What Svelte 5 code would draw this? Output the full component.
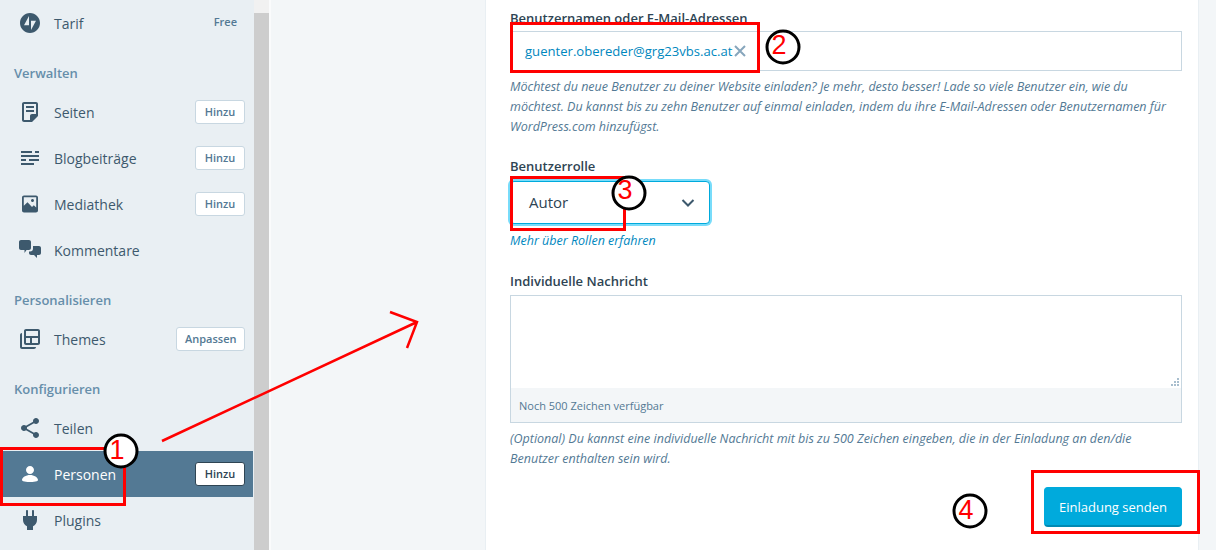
<script>
  const paths = {
    plan: 'M12 2C6.477 2 2 6.477 2 12s4.477 10 10 10 10-4.477 10-10S17.523 2 12 2zM11 5L6 14.200H11V5zM13 9.800h5L13 19V9.800z',
    pages: 'M16 8H8V6h8v2zm0 2H8v2h8v-2zm4-6v12l-6 6H6c-1.105 0-2-.895-2-2V4c0-1.105.895-2 2-2h12c1.105 0 2 .895 2 2zm-2 10V4H6v16h6v-4c0-1.105.895-2 2-2h4z',
    posts: 'M16 19H3v-2h13v2zm5-10H3v2h18V9zM3 5v2h11V5H3zm14 0v2h4V5h-4zm-6 8v2h10v-2H11zm-8 0v2h5v-2H3z',
    image: 'M6 3.500h12c1.100 0 2 .9 2 2v13c0 1.100-.9 2-2 2H6c-1.100 0-2-.9-2-2v-13c0-1.100.9-2 2-2zM5.800 5.300v8.400l3.700-3.500 4.500 4.800 1.800-1.800 2.400 2.300V5.300H5.800zM14.500 7c.83 0 1.500.67 1.500 1.500S15.330 10 14.500 10 13 9.330 13 8.500 13.670 7 14.500 7z',
    comments: 'M3 2h8c1.100 0 2 .9 2 2v6c0 1.100-.9 2-2 2H8.500L6.500 15v-3H3c-1.100 0-2-.9-2-2V4c0-1.100.9-2 2-2zM15 8h6c1.100 0 2 .9 2 2v5c0 1.100-.9 2-2 2h-2v3l-3-3h-3c-1.100 0-2-.9-2-2v-1.500h1c2 0 3-1 3-3V8z',
    themes: 'M4 6c-1.105 0-2 .895-2 2v12c0 1.100.9 2 2 2h12c1.105 0 2-.895 2-2H4V6zm16-4H8c-1.105 0-2 .895-2 2v12c0 1.105.895 2 2 2h12c1.105 0 2-.895 2-2V4c0-1.105-.895-2-2-2zm0 14h-6v-5h6v5zm-8 0H8v-5h4v5zm8-7H8V4h12v5z',
    share: 'M18 16c-.788 0-1.500.31-2.034.807L8.910 12.700c.05-.23.09-.46.09-.7s-.04-.47-.09-.7l7.050-4.110c.54.5 1.250.81 2.040.81 1.660 0 3-1.340 3-3s-1.340-3-3-3-3 1.340-3 3c0 .24.04.47.09.7L8.040 9.810C7.500 9.310 6.790 9 6 9c-1.660 0-3 1.340-3 3s1.340 3 3 3c.79 0 1.500-.31 2.040-.81l7.050 4.120c-.05.22-.09.45-.09.69 0 1.660 1.340 3 3 3s3-1.340 3-3-1.340-3-3-3z',
    user: 'M12 4c2.210 0 4 1.790 4 4s-1.790 4-4 4-4-1.790-4-4 1.790-4 4-4zm0 16s8 0 8-2c0-2.400-3.900-5-8-5s-8 2.600-8 5c0 2 8 2 8 2z',
    plugins: 'M16 8V3c0-.552-.448-1-1-1s-1 .448-1 1v5h-4V3c0-.552-.448-1-1-1s-1 .448-1 1v5H5v4c0 2.790 1.637 5.193 4 6.317V22h6v-3.683c2.363-1.124 4-3.527 4-6.317V8h-3z'
  };
  const sections = [
    { rows: [{ icon: 'plan', label: 'Tarif', note: 'Free' }] },
    { title: 'Verwalten', rows: [
      { icon: 'pages', label: 'Seiten', action: 'Hinzu' },
      { icon: 'posts', label: 'Blogbeiträge', action: 'Hinzu' },
      { icon: 'image', label: 'Mediathek', action: 'Hinzu' },
      { icon: 'comments', label: 'Kommentare' }
    ] },
    { title: 'Personalisieren', rows: [{ icon: 'themes', label: 'Themes', action: 'Anpassen' }] },
    { title: 'Konfigurieren', rows: [
      { icon: 'share', label: 'Teilen' },
      { icon: 'user', label: 'Personen', action: 'Hinzu', selected: true },
      { icon: 'plugins', label: 'Plugins' }
    ] }
  ];
  const boxes = [
    { x: 1.5, y: 448.5, w: 123, h: 56 },
    { x: 511, y: 23, w: 247, h: 48 },
    { x: 511, y: 177.500, w: 113, h: 52 },
    { x: 1032, y: 471, w: 166, h: 61 }
  ];
  const marks = [
    { n: '1', cx: 121, cy: 451, dx: -4, dy: -1 },
    { n: '2', cx: 783, cy: 47, dx: -4, dy: -2 },
    { n: '3', cx: 629, cy: 193, dx: -4, dy: -3 },
    { n: '4', cx: 970, cy: 511, dx: -4, dy: -1 }
  ];
</script>

<div class="page">
  <aside class="sidebar">
    {#each sections as section}
      {#if section.title}<h2 class="section-title">{section.title}</h2>{/if}
      {#each section.rows as row}
        <div class="row" class:selected={row.selected}>
          <svg class="icon" viewBox="0 0 24 24" aria-hidden="true"><path fill-rule="evenodd" d={paths[row.icon]} /></svg>
          <span class="row-label">{row.label}</span>
          {#if row.note}<span class="note">{row.note}</span>{/if}
          {#if row.action}<button class="row-action">{row.action}</button>{/if}
        </div>
      {/each}
    {/each}
  </aside>
  <div class="scrollbar"><div class="scroll-top"></div></div>
  <main class="main">
    <section class="card">
      <div class="field-label clipped">Benutzernamen oder E-Mail-Adressen</div>
      <div class="token-input">
        <span class="token">guenter.obereder@grg23vbs.ac.at</span>
        <svg class="token-x" viewBox="0 0 14 14" aria-hidden="true"><path d="M2 2l10 10M12 2L2 12" /></svg>
      </div>
      <p class="help first">Möchtest du neue Benutzer zu deiner Website einladen? Je mehr, desto besser! Lade so viele Benutzer ein, wie du möchtest. Du kannst bis zu zehn Benutzer auf einmal einladen, indem du ihre E-Mail-Adressen oder Benutzernamen für WordPress.com hinzufügst.</p>

      <div class="field-label role">Benutzerrolle</div>
      <div class="select">
        <span>Autor</span>
        <svg class="chevron" viewBox="0 0 14 10" aria-hidden="true"><path d="M1.500 2l5.500 5.500L12.500 2" /></svg>
      </div>
      <div class="role-link">Mehr über Rollen erfahren</div>

      <div class="field-label message">Individuelle Nachricht</div>
      <div class="textarea">
        <div class="textarea-body">
          <svg class="grip" viewBox="0 0 8 8" aria-hidden="true"><path d="M6 0h2v2H6zM3 3h2v2H3zM6 3h2v2H6zM0 6h2v2H0zM3 6h2v2H3zM6 6h2v2H6z" /></svg>
        </div>
        <div class="counter">Noch 500 Zeichen verfügbar</div>
      </div>
      <p class="help second">(Optional) Du kannst eine individuelle Nachricht mit bis zu 500 Zeichen eingeben, die in der Einladung an den/die Benutzer enthalten sein wird.</p>
      <div class="actions"><button class="primary">Einladung senden</button></div>
    </section>
  </main>

  <svg class="annotations" viewBox="0 0 1216 550" aria-hidden="true">
    {#each boxes as b}
      <rect x={b.x} y={b.y} width={b.w} height={b.h} class="red-box" />
    {/each}
    <path class="arrow" d="M162 441L417 322M390 312L417 322L407 348" />
    {#each marks as m}
      <circle cx={m.cx} cy={m.cy} r="16" class="ring" />
    {/each}
  </svg>
  {#each marks as m}
    <span class="digit" style="left:{m.cx - 16 + m.dx}px;top:{m.cy - 17 + m.dy}px">{m.n}</span>
  {/each}
</div>

<style>
  :global(body) {
    margin: 0;
    background: #f3f6f8;
  }
  .page {
    position: relative;
    display: flex;
    width: 1216px;
    height: 550px;
    overflow: hidden;
    font-family: "Open Sans", "Noto Sans", sans-serif;
    color: #2e4453;
  }
  .sidebar {
    width: 253px;
    flex: none;
    background: #e9eff3;
    border-right: 1px solid #e9eff3;
  }
  .section-title {
    margin: 0;
    height: 43px;
    box-sizing: border-box;
    padding: 18px 0 0 14px;
    font-size: 13px;
    line-height: 18px;
    font-weight: 600;
    color: #668eaa;
  }
  .row {
    display: flex;
    align-items: center;
    height: 46px;
    padding: 0 8px 0 18px;
  }
  .row.selected {
    background: #537994;
  }
  .icon {
    width: 24px;
    height: 24px;
    flex: none;
    fill: #3d596d;
  }
  .selected .icon {
    fill: #fff;
  }
  .row-label {
    flex: 1;
    margin-left: 12px;
    font-size: 14px;
    color: #3d596d;
  }
  .selected .row-label {
    color: #fff;
  }
  .note {
    font-size: 11px;
    font-weight: 600;
    color: #537994;
    margin: -4px 8px 0 0;
  }
  .row-action {
    min-width: 50px;
    height: 24px;
    padding: 0 7.500px;
    font: 600 11px/20px "Open Sans", sans-serif;
    color: #537994;
    background: #fff;
    border: 1px solid #c8d7e1;
    border-radius: 3px;
  }
  .selected .row-action {
    color: #2e4453;
    border-color: #2e4453;
  }
  .scrollbar {
    width: 15px;
    flex: none;
    background: #cdcdcd;
    border-right: 2px solid #fafbfc;
  }
  .scroll-top {
    height: 13px;
    background: #f1f1f1;
  }
  .main {
    flex: 1;
    min-width: 0;
    padding: 0 18px 0 215px;
    background: #f3f6f8;
  }
  .card {
    height: 550px;
    box-sizing: border-box;
    padding: 9px 16px 0 24px;
    background: #fff;
    box-shadow: 0 0 0 1px #e9eff3;
  }
  .field-label {
    font-size: 13px;
    font-weight: 600;
    line-height: 18px;
    color: #2e4453;
  }
  .token-input {
    display: flex;
    align-items: center;
    height: 40px;
    margin-top: 4px;
    box-sizing: border-box;
    padding-left: 14px;
    border: 1px solid #c8d7e1;
  }
  .token {
    font-size: 13.100px;
    color: #0087be;
  }
  .token-x {
    width: 14px;
    height: 14px;
    margin-left: 1px;
    fill: none;
    stroke: #87a6bc;
    stroke-width: 2;
  }
  .help {
    margin: 0;
    font-size: 12.500px;
    line-height: 20px;
    font-style: italic;
    color: #537994;
  }
  .help.first {
    margin-top: 6px;
  }
  .role {
    margin-top: 20px;
  }
  .select {
    display: flex;
    align-items: center;
    justify-content: space-between;
    width: 200px;
    height: 43px;
    margin-top: 6px;
    box-sizing: border-box;
    padding: 0 14px 0 18px;
    font-size: 15px;
    color: #2e4453;
    background: #fff;
    border: 1px solid #00aadc;
    border-radius: 4px;
    box-shadow: 0 0 0 2px #78dcfa;
  }
  .select span {
    margin-top: -2px;
  }
  .chevron {
    width: 14px;
    height: 10px;
    fill: none;
    stroke: #3d596d;
    stroke-width: 2;
  }
  .role-link {
    margin-top: 8px;
    font-size: 12.500px;
    line-height: 18px;
    font-style: italic;
    color: #0087be;
  }
  .message {
    margin-top: 22px;
  }
  .textarea {
    height: 128px;
    margin-top: 5px;
    box-sizing: border-box;
    border: 1px solid #c8d7e1;
    display: flex;
    flex-direction: column;
  }
  .textarea-body {
    flex: 1;
    position: relative;
  }
  .grip {
    position: absolute;
    right: 2px;
    bottom: 2px;
    width: 8px;
    height: 8px;
    fill: #a8bece;
  }
  .counter {
    height: 34px;
    padding-left: 8px;
    font-size: 11px;
    line-height: 35px;
    color: #537994;
    background: #f3f6f8;
  }
  .help.second {
    margin-top: 6px;
  }
  .actions {
    display: flex;
    justify-content: flex-end;
    margin-top: 18px;
  }
  .primary {
    width: 138px;
    height: 40px;
    padding: 0;
    font: 400 13px/20px "Open Sans", sans-serif;
    color: #fff;
    background: #00aadc;
    border-style: solid;
    border-width: 1px 1px 2px;
    border-color: #00aadc #00aadc #008ab3;
    border-radius: 4px;
  }
  .annotations {
    position: absolute;
    inset: 0;
    width: 1216px;
    height: 550px;
    pointer-events: none;
  }
  .red-box {
    fill: none;
    stroke: #f00;
    stroke-width: 3;
    shape-rendering: crispEdges;
  }
  .arrow {
    fill: none;
    stroke: #f00;
    stroke-width: 2.500;
  }
  .ring {
    fill: #fff;
    stroke: #000;
    stroke-width: 3;
  }
  .digit {
    position: absolute;
    width: 32px;
    text-align: center;
    font: 400 27px/34px "Liberation Sans", Arial, sans-serif;
    color: #f00;
  }
</style>
